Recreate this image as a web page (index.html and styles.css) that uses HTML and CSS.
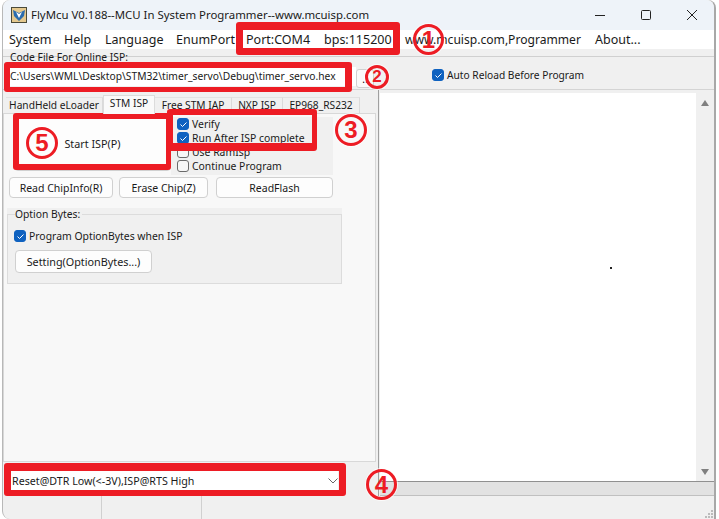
FILE: index.html
```html
<!DOCTYPE html>
<html lang="en">
<head>
<meta charset="utf-8">
<title>FlyMcu</title>
<link rel="stylesheet" href="styles.css">
</head>
<body>
<div class="window">
  <header class="titlebar">
    <svg class="appicon" width="16" height="16" viewBox="0 0 16 16"><rect x=".5" y=".5" width="15" height="15" fill="#e4c88e" stroke="#4a4a3a"/><path d="M2 3l6 3 6-3-1 6-5 5-5-5z" fill="#2a6cae"/><path d="M5 5l3 6 3-6-3 2z" fill="#fff"/></svg>
    <span class="title">FlyMcu V0.188--MCU In System Programmer--www.mcuisp.com</span>
    <div class="wincontrols">
      <svg width="12" height="12" viewBox="0 0 12 12"><path d="M1 6.500h10" stroke="#222" fill="none"/></svg>
      <svg width="12" height="12" viewBox="0 0 12 12"><rect x="1.500" y="1.500" width="9" height="9" rx="1" stroke="#222" fill="none"/></svg>
      <svg width="12" height="12" viewBox="0 0 12 12"><path d="M1 1l10 10M11 1L1 11" stroke="#222" fill="none"/></svg>
    </div>
  </header>
  <nav class="menubar">
    <span class="m-system">System</span>
    <span class="m-help">Help</span>
    <span class="m-lang">Language</span>
    <span class="m-enum">EnumPort</span>
    <span class="m-port">Port:COM4</span>
    <span class="m-bps">bps:115200</span>
    <span class="m-www">www.mcuisp.com,Programmer</span>
    <span class="m-about">About...</span>
  </nav>
  <section class="filebar">
    <div class="filecol">
      <div class="filelabel">Code File For Online ISP:</div>
      <div class="fileinput">C:\Users\WML\Desktop\STM32\timer_servo\Debug\timer_servo.hex</div>
    </div>
    <button class="browse">..</button>
    <label class="check autoreload"><span class="box on"><svg width="9" height="9" viewBox="0 0 9 9"><path d="M1.500 4.500l2 2 4-4" stroke="#fff" fill="none"/></svg></span>Auto Reload Before Program</label>
  </section>
  <main class="body">
    <div class="leftpane">
      <div class="tabs">
        <span class="tab t1">HandHeld eLoader</span>
        <span class="tab t2">STM ISP</span>
        <span class="tab t3">Free STM IAP</span>
        <span class="tab t4">NXP ISP</span>
        <span class="tab t5">EP968_RS232</span>
      </div>
      <div class="tabpanel">
        <div class="toprow">
          <button class="btn startbtn">Start ISP(P)</button>
          <div class="checks">
            <label class="check"><span class="box on"><svg width="9" height="9" viewBox="0 0 9 9"><path d="M1.500 4.500l2 2 4-4" stroke="#fff" fill="none"/></svg></span>Verify</label>
            <label class="check"><span class="box on"><svg width="9" height="9" viewBox="0 0 9 9"><path d="M1.500 4.500l2 2 4-4" stroke="#fff" fill="none"/></svg></span>Run After ISP complete</label>
            <label class="check"><span class="box"></span>Use RamIsp</label>
            <label class="check"><span class="box"></span>Continue Program</label>
          </div>
        </div>
        <div class="btnrow">
          <button class="btn b-read">Read ChipInfo(R)</button>
          <button class="btn b-erase">Erase Chip(Z)</button>
          <button class="btn b-flash">ReadFlash</button>
        </div>
        <div class="optwrap">
          <fieldset class="optgroup">
            <legend>Option Bytes:</legend>
            <label class="check"><span class="box on"><svg width="9" height="9" viewBox="0 0 9 9"><path d="M1.500 4.500l2 2 4-4" stroke="#fff" fill="none"/></svg></span>Program OptionBytes when ISP</label>
            <button class="btn b-setting">Setting(OptionBytes...)</button>
          </fieldset>
        </div>
      </div>
      <div class="combo"><span>Reset@DTR Low(&lt;-3V),ISP@RTS High</span><svg width="10" height="6" viewBox="0 0 10 6"><path d="M.5.5L5 5 9.500.5" stroke="#666" fill="none"/></svg></div>
    </div>
    <div class="rightpane">
      <div class="log">
        <div class="logarea"><i class="dot"></i></div>
        <div class="vscroll">
          <svg width="8" height="6" viewBox="0 0 8 6"><path d="M0 6h8L4 0z" fill="#808080"/></svg>
          <svg width="8" height="6" viewBox="0 0 8 6"><path d="M0 0h8L4 6z" fill="#808080"/></svg>
        </div>
      </div>
      <div class="hscroll"></div>
    </div>
  </main>
  <footer class="statusbar">
    <span class="s1"></span><span class="s2"></span>
    <span class="s3"><svg width="10" height="10" viewBox="0 0 10 10"><path d="M7 1h2v2H7zM4 4h2v2H4zM7 4h2v2H7zM1 7h2v2H1zM4 7h2v2H4zM7 7h2v2H7z" fill="#bbb"/></svg></span>
  </footer>
</div>

<div class="mark mk-start"></div>
<div class="mark mk-port"></div>
<div class="mark mk-file"></div>
<div class="mark mk-checks"></div>
<div class="mark mk-combo"></div>
<div class="num n1">1</div>
<div class="num n2">2</div>
<div class="num n3">3</div>
<div class="num n4">4</div>
<div class="num n5">5</div>
</body>
</html>
```

FILE: styles.css
```css
* { box-sizing: border-box; }
html, body { margin: 0; padding: 0; }
body {
  width: 719px; height: 519px; overflow: hidden; position: relative; background: #fff; padding-left: 2px;
  font: 10.400px/14px "Noto Sans", "Open Sans", sans-serif; color: #1a1a1a;
}
.window {
  width: 714px; height: 519px; display: flex; flex-direction: column;
  background: #f0f0f0; border-radius: 8px 8px 0 8px; border-right: 2px solid #a8a8a8; border-left: 1px solid #b8b8b8;
}
.titlebar {
  height: 30px; flex: none; display: flex; align-items: center; padding-left: 8px;
  background: #eef3f9; font-size: 11.400px; border-radius: 8px 8px 0 0;
}
.appicon { flex: none; margin-right: 4px; }
.title { white-space: nowrap; }
.wincontrols { margin-left: auto; display: flex; gap: 34px; padding-right: 16px; }
.menubar {
  height: 19px; flex: none; background: #fff; display: flex; align-items: center;
  font-size: 12.500px; white-space: nowrap; padding-left: 6px;
}
.menubar span { display: block; }
.m-system { width: 55px; }
.m-help { width: 41px; }
.m-lang { width: 71px; }
.m-enum { width: 70px; }
.m-port { width: 78px; }
.m-bps { width: 81px; }
.m-www { width: 190px; font-size: 12.100px; }
.filebar {
  height: 41px; flex: none; display: flex; border-bottom: 1px solid #d4d4d4;
  background: linear-gradient(#d0d0d0, #d0d0d0) 0 7px / 100% 1px no-repeat;
}
.filecol { width: 353px; padding-left: 7px; }
.filelabel { font-size: 10.300px; line-height: 13px; margin-top: 2px; }
.fileinput {
  margin-top: 3px; height: 19px; line-height: 18px; font-size: 10.260px; white-space: nowrap; background: #fff;
}
.browse {
  width: 18px; height: 19px; margin: 20px 0 0 0; padding: 0; font: 10px/14px "Noto Sans", sans-serif;
  border: 1px solid #d0d0d0; background: #fafafa; border-radius: 3px;
}
.check { display: flex; align-items: center; gap: 3px; white-space: nowrap; height: 14px; font-size: 10.400px; }
.box {
  width: 12px; height: 12px; flex: none; border: 1px solid #6a6a6a; border-radius: 3px; background: #f6f6f6;
  display: flex; align-items: center; justify-content: center;
}
.box.on { background: #0f62c0; border-color: #0f62c0; }
.autoreload { margin: 19px 0 0 58px; font-size: 10.200px; }
.body { flex: 1; display: flex; min-height: 0; }
.leftpane { width: 376px; flex: none; display: flex; flex-direction: column; padding-top: 5px; border-right: 1px solid #a0a0a0; }
.tabs { height: 18px; flex: none; display: flex; align-items: flex-end; font-size: 10.200px; padding-left: 3px; }
.tab { height: 16px; line-height: 15px; white-space: nowrap; text-align: center; border-top: 1px solid #e2e2e2; border-right: 1px solid #dadada; }
.t1 { width: 97px; }
.t2 { width: 52px; height: 19px; line-height: 14px; background: #fafafa; border: 1px solid #dcdcdc; border-bottom: 0; position: relative; z-index: 1; margin-bottom: -1px; }
.t3 { width: 77px; }
.t4 { width: 51px; }
.t5 { width: 77px; }
.tabpanel {
  width: 373px; height: 349px; flex: none; background: #f8f8f8; border: 1px solid #d8d8d8;
  padding-left: 5px; display: flex; flex-direction: column;
}
.toprow { display: flex; height: 62px; padding-top: 3px; }
.btn {
  display: block; font: 10.500px/14px "Noto Sans", "Open Sans", sans-serif; color: #1a1a1a; background: #fdfdfd;
  border: 1px solid #d0d0d0; border-radius: 4px; padding: 0; white-space: nowrap;
}
.startbtn { width: 157px; height: 54px; margin-left: 5px; font-size: 10.800px; }
.checks { width: 162px; height: 58px; background: #f0f0f0; display: flex; flex-direction: column; padding-left: 6px; }
.btnrow { display: flex; height: 26px; padding-top: 1px; }
.b-read { width: 104px; height: 21px; }
.b-erase { width: 89px; height: 21px; margin-left: 6px; }
.b-flash { width: 117px; height: 21px; margin-left: 8px; }
.optwrap { width: 335px; height: 76px; margin: 6px 0 0 -2px; background: #f0f0f0; }
.optgroup {
  width: 335px; height: 76px; margin: 0; padding: 0 0 0 7px; border: 1px solid #dcdcdc; min-width: 0;
}
.optgroup legend { font-size: 10.300px; line-height: 12px; padding: 0 2px 0 0; }
.optgroup .check { margin: 9px 0 0 -1px; }
.b-setting { width: 137px; height: 23px; margin: 7px 0 0 0; font-size: 10.800px; }
.combo {
  width: 327px; height: 19px; margin: 9px 0 0 8px; background: #fff; display: flex; align-items: center;
  justify-content: space-between; padding-left: 1px; font-size: 10.700px; white-space: nowrap;
}
.rightpane { flex: 1; display: flex; flex-direction: column; min-width: 0; padding: 3px 0 0 1px; }
.log { flex: 1; display: flex; min-height: 0; }
.logarea { flex: 1; background: #fff; position: relative; }
.dot { position: absolute; left: 230px; top: 174px; width: 2px; height: 2px; background: #222; }
.vscroll {
  width: 18px; background: #f0f0f0; display: flex; flex-direction: column; justify-content: space-between;
  align-items: center; padding: 7px 0 6px;
}
.hscroll { height: 15px; flex: none; background: #e2e2e2; border-top: 1px solid #909090; border-bottom: 1px solid #c0c0c0; }
.statusbar { height: 23px; flex: none; display: flex; }
.statusbar span { display: block; height: 100%; }
.s1, .s2 { width: 100px; border-right: 1px solid #d0d0d0; }
.s1 { width: 99px; }
.s3 { flex: 1; display: flex !important; justify-content: flex-end; align-items: flex-end; }

.mark { position: absolute; border-style: solid; border-color: #ed1c24; border-radius: 3px; }
.mk-port { left: 236px; top: 22px; width: 164px; height: 33px; border-width: 8px 7px 7px; }
.mk-file { left: 4px; top: 62px; width: 348px; height: 30px; border-width: 6px 7px 5px 6px; }
.mk-checks { left: 167px; top: 109px; width: 150px; height: 42px; border-width: 6px 5px 8px 6px; }
.mk-start { left: 13px; top: 113px; width: 158px; height: 57px; border-width: 6px 5px 6px 6px; }
.mk-combo { left: 4px; top: 463px; width: 342px; height: 33px; border-width: 8px 7px 6px; }
.num {
  position: absolute; width: 32px; height: 32px; border: 3.500px solid #ed1c24; border-radius: 50%;
  color: #ed1c24; font: 700 24px/25px "Liberation Sans", sans-serif; text-align: center;
  box-shadow: 0 0 0 1px rgba(255,255,255,.7);
}
.n1 { left: 413px; top: 24px; width: 31px; height: 31px; }
.n2 { left: 365px; top: 65px; width: 24px; height: 24px; border-width: 3px; font-size: 17px; line-height: 18px; }
.n3 { left: 335px; top: 114px; }
.n4 { left: 366px; top: 469px; width: 31px; height: 31px; }
.n5 { left: 26px; top: 127px; }
```
